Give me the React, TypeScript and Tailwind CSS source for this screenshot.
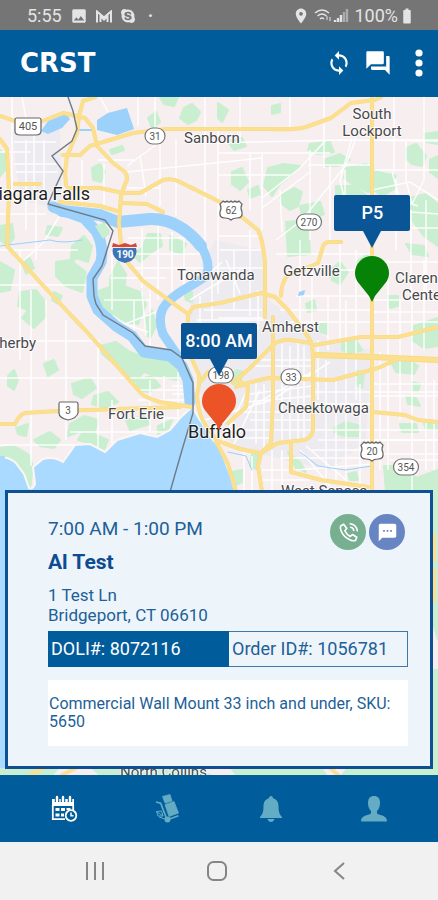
import React from 'react';
import {
  MdBatteryFull,
  MdForum,
  MdImage,
  MdLocationOn,
  MdSms,
  MdSync,
} from 'react-icons/md';
import { FaSkype } from 'react-icons/fa';

const parks = [
  '0,150 6,156 5,170 0,176',
  '160,97 178,97 174,106 164,104',
  '184,108 192,104 200,112 196,120 188,124 180,118',
  '148,118 156,112 160,122 152,128',
  '92,168 100,164 105,172 101,182 93,180',
  '110,150 122,146 124,150 112,154',
  '0,226 12,224 14,238 8,246 0,240',
  '48,226 62,228 58,236 46,234',
  '72,246 84,236 92,246 88,262 76,258 70,266',
  '56,262 70,260 86,272 82,292 66,286 56,276',
  '22,262 30,258 34,268 26,274',
  '96,228 104,224 109,233 103,238',
  '148,234 160,234 162,246 152,252 140,262 132,254 142,248',
  '170,236 186,244 182,254 170,250',
  '110,278 118,262 126,274 124,292 110,290',
  '96,292 118,284 140,292 146,304 138,324 126,322 114,314 104,316 96,306',
  '146,318 152,310 156,326 150,338 146,334',
  '0,262 14,270 10,290 0,292',
  '20,292 36,290 44,300 46,316 34,328 22,318 28,310 18,306',
  '54,292 62,296 58,304 52,300',
  '44,364 54,360 58,370 48,376',
  '8,376 14,370 18,380 14,390 8,386',
  '100,346 116,342 130,352 142,356 170,362 182,372 178,380 156,376 144,372 134,382 124,374 112,362 102,354',
  '136,380 152,376 160,386 148,392 138,390',
  '72,384 90,378 96,388 82,398 74,394',
  '94,396 108,392 118,402 104,408 92,404',
  '70,424 84,416 98,420 94,434 108,440 104,450 92,444 78,440 84,430 68,436',
  '126,420 144,416 150,424 130,430',
  '34,440 50,432 60,440 54,448 40,446',
  '16,428 28,424 26,436 18,434',
  '0,448 14,446 28,454 33,466 30,488 22,476 12,464 0,456',
  '158,426 172,420 168,430 158,434',
  '218,103 228,110 222,122 218,118',
  '228,142 242,138 246,146 234,150',
  '272,106 280,104 280,112 272,114',
  '268,168 284,164 300,166 290,176 280,184 272,196 264,186',
  '280,196 294,188 302,192 298,206 290,210 282,204',
  '286,222 308,220 310,254 288,256',
  '310,144 330,142 334,152 318,154 308,150',
  '324,160 340,154 350,160 338,166 326,166',
  '346,168 366,164 378,172 396,176 384,188 368,192 352,184 344,178',
  '336,186 354,186 370,198 366,210 350,204 336,206',
  '300,206 320,202 324,214 310,222 302,216',
  '406,148 416,144 426,156 422,166 412,164 406,158',
  '430,160 438,156 438,178 430,172',
  '424,134 438,132 438,144 426,142',
  '376,178 392,174 396,188 382,196 374,190',
  '410,198 426,194 438,204 438,246 424,236 412,220 408,210',
  '330,270 340,262 348,272 340,284 332,280',
  '356,262 368,254 366,272 358,276',
  '406,244 424,246 428,256 412,254',
  '232,172 242,168 248,182 240,190 232,184',
  '248,190 258,186 260,194 250,198',
  '184,292 192,292 192,302 186,300',
  '306,304 314,300 316,310 308,312',
  '320,324 328,324 328,334 320,332',
  '342,342 356,340 362,350 350,354 342,350',
  '388,296 398,296 398,306 390,308',
  '414,326 438,318 438,346 424,348 412,340',
  '392,364 406,358 418,366 414,374 396,372',
  '356,370 364,374 362,388 356,384',
  '334,428 346,422 360,426 358,436 344,436 334,432',
  '400,424 416,424 418,432 402,432',
  '406,396 416,398 420,406 408,404',
  '424,424 438,422 438,430 426,430',
  '384,466 404,466 416,478 438,470 438,492 386,492',
  '288,452 300,462 306,472 296,468',
  '232,472 242,470 242,482 234,486',
  '252,454 260,456 258,470 250,466',
  '348,474 356,472 358,480 350,480',
  '412,382 420,384 418,392 412,390',
  '236,370 244,372 238,386 232,380',
  '432,492 438,492 438,640 432,620',
  '434,670 438,670 438,775 434,775',
  '0,766 60,766 52,775 0,775',
  '90,766 190,766 210,775 100,775',
  '230,766 320,766 326,775 236,775',
  '350,766 438,766 438,775 342,775',
];

const minorRoads = [
  'M0 152H30M12 97V200M26 140V230M34 128V196M44 140L44 190M14 142H56M14 164H60M16 172H58M0 214H46M36 200V260M22 97L26 118',
  'M100 97L108 112M138 97V126M155 97V128M205 97V280M218 130V294M0 250H78M20 250V360M0 285H90M60 215L44 242L22 262',
  'M98 160H135M82 160V214M104 164V206M126 172L205 164L262 158M127 166L160 142M160 130V206M176 140V216M127 188H160M140 155L146 196',
  'M128 238H200M132 254H202M130 268H204M142 228V288M158 226V300M172 232V292M184 238V288M110 278H166M104 300H150M112 252V310',
  'M0 341H100M0 378H192M31 290V466M66 320V440M98 345V452M0 445H80M70 432H172M112 400V444M150 380V432M164 376V428M178 372V420M138 400H190M140 390H188M172 386H192M172 394H192M130 418H180M46 300V360',
  'M150 290V346M134 300V334M120 326L156 312M108 318L148 332M146 336L142 292',
  'M218 143L250 142L340 140L438 141M218 153H330M218 175H290M250 153V210M262 153V230M324 97V168M240 97V143M290 97V128',
  'M262 198L300 168L326 140M262 208L310 172M276 240L302 220L346 165L356 138M308 165H372M310 150V240M280 190L282 232M330 166V240M345 170V200M352 138L340 180L346 206',
  'M372 140H438M372 170H438M372 190L410 182L438 200M372 202H400M406 140V180L412 204L424 180V97M394 97V172M392 172L400 200L418 206M372 228H438M372 262H438M411 210V300M426 200V300M396 180V250M384 210L438 214',
  'M276 254H371M300 240V330M312 262V330M340 240V340M356 250V400M318 270H372M280 310H372M290 322H438M296 296H372M328 296V350M346 300V400M388 260V470M400 300V420M412 290V490M424 260V350M372 300H438M372 312H438M380 352V470',
  'M190 300L206 290L240 270M200 296V340M212 280V320M226 260L240 294M234 250V310M250 230V316M258 290V330M196 320H264M204 310H262M196 286L222 262M218 236H262M220 250H262M214 268H264',
  'M218 318H262M264 326H312M260 360H312M255 366H312M250 394L312 386M246 402L312 396M240 412H312M250 420H312M228 430H312M234 438H270M256 380V444M264 384V448M282 344V440M290 346V440M298 340V440M304 346V442',
  'M218 452L250 384M232 448L260 390M205 420L272 400L330 362M210 430L312 372M312 392H438M312 404H372M312 430H438M318 440H438M326 360V492M336 380V480M346 400V492M360 384V492M312 450H372M280 458H372M296 470L372 464M244 452V492M252 456V492M272 450V492M282 450V492',
  'M372 384H438M372 396H438M372 440H438M372 454H438M390 460H438M426 360V470M434 380V470M300 450L330 486M306 446L346 480M262 470H290M262 480H310M318 340V400',
];

const highways = [
  'M0 116L15 121L40 122L63 113L72 115L85 118L93 128L97 146L113 163L125 172Q129 178 125 184L121 196L119 223L121 243L128 263L143 281L155 290L188 314',
  'M95 97L83 101L79 116L77 133L67 156L65 173L66 185',
  'M63 155H80L90 146L133 133L167 129H270Q296 130 306 127L331 118L351 103L375 100L381 97',
  'M0 139L7 149L9 193L7 246L50 293L87 332L140 392Q143 397 160 402L192 407',
  'M15 184H40',
  'M68 188H100L123 193H140L163 180Q172 178 180 182L220 202L243 218L258 230Q263 240 265 263V317',
  'M60 202L100 206L117 211M123 203L147 204L163 212',
  'M372 97V492',
  'M341 242H328Q323 243 322 250L318 263L287 276Q281 284 281 296',
  'M188 315L193 307L220 303L261 293L275 297L288 310L309 338Q313 344 313 360V428Q313 438 304 440L278 443L261 453L240 449L218 441',
  'M315 345L361 337H398L438 327',
  'M233 383L250 368L273 345Q280 339 291 340L311 343',
  'M273 317V400L271 443L261 453',
  'M238 380L248 387L246 407L228 423',
  'M236 387L248 383L268 378L333 380L378 368L400 358',
  'M373 412L405 415L418 420L438 422',
  'M291 443V472L321 480L368 487',
  'M261 453L258 466L262 492',
  'M216 441L228 464L236 492',
  'M0 424H15Q20 414 25 413L58 411L180 407',
  'M188 314L187 348L199 375Q200 383 197 395Q198 414 206 426L217 441',
  'M200 382L208 372L216 372',
];

const towns: { name: string; x: number; y: number; anchor?: 'start' | 'middle' | 'end'; big?: boolean }[] = [
  { name: 'Niagara Falls', x: 90, y: 200, anchor: 'end', big: true },
  { name: 'Buffalo', x: 188, y: 438, big: true },
  { name: 'Sanborn', x: 184, y: 143 },
  { name: 'South', x: 372, y: 119, anchor: 'middle' },
  { name: 'Lockport', x: 372, y: 136, anchor: 'middle' },
  { name: 'Tonawanda', x: 177, y: 280 },
  { name: 'Getzville', x: 283, y: 276 },
  { name: 'Clarence', x: 395, y: 283 },
  { name: 'Center', x: 402, y: 300 },
  { name: 'Amherst', x: 262, y: 332 },
  { name: 'Netherby', x: 36, y: 348, anchor: 'end' },
  { name: 'Fort Erie', x: 108, y: 419 },
  { name: 'Cheektowaga', x: 278, y: 413 },
  { name: 'West Seneca', x: 281, y: 496 },
  { name: 'North Collins', x: 120, y: 777 },
];

const shields = [
  { label: '31', x: 155, y: 136, w: 20 },
  { label: '270', x: 309, y: 222, w: 25 },
  { label: '198', x: 221, y: 375, w: 25 },
  { label: '33', x: 291, y: 377, w: 20 },
  { label: '354', x: 406, y: 467, w: 25 },
];

const usShields = [
  { label: '62', x: 231, y: 210 },
  { label: '20', x: 372, y: 451 },
];

const RouteMap = () => (
  <svg
    className="absolute inset-0 h-full w-full"
    viewBox="0 97 438 678"
    preserveAspectRatio="xMidYMin slice"
    fontFamily="Roboto, sans-serif"
    aria-label="Route map"
  >
    <rect y="97" width="438" height="678" fill="#f6eeef" />

    {/* Built-up areas */}
    <path d="M12 130L60 130L62 200L46 206L20 200Z M190 285L215 240L262 250L268 300L330 340L372 350L366 440L330 470L240 450L205 420L190 330Z" fill="#edebf0" />
    <g fill="#c9efd0" stroke="#c9efd0" strokeWidth="2" strokeLinejoin="round">
      {parks.map((points) => (
        <polygon key={points} points={points} />
      ))}
    </g>

    <g fill="none" stroke="#fff" strokeWidth="1.5" strokeOpacity="0.9" strokeLinejoin="round">
      {minorRoads.map((d) => (
        <path key={d} d={d} />
      ))}
    </g>

    {/* Lake and river */}
    <path
      d="M0 457Q8 457 15 462L24 474L29 488Q33 490 35 484L33 467L43 459Q54 456 63 462L75 445L90 444L105 452L117 440L140 433L157 437L170 430L180 418L192 407L200 420L213 440L220 448L231 477L235 492L180 640L0 766Z"
      fill="#aadaff"
      stroke="#fdf6f3"
      strokeWidth="2"
    />
    <path d="M0 456V768" stroke="#aadaff" strokeWidth="10" />
    <g fill="none" stroke="#9bd1fa" strokeLinejoin="round" strokeLinecap="round">
      <path strokeWidth="11" d="M53 207L84 218L96 231Q104 245 101 262L92 278V296L98 310L116 326L132 336L144 352L170 356L182 366L188 380L190 402" />
      <path strokeWidth="12" d="M62 211L100 215L118 222L150 219C172 218 190 232 201 246" />
      <path strokeWidth="9" d="M201 246C208 258 210 268 206 276C196 284 180 290 170 300C160 308 158 320 163 334L178 356" />
      <path strokeWidth="1" d="M82 240Q62 244 50 240L0 246M228 452L246 456L252 470M300 452L318 466L345 470L372 466" />
    </g>
    <path d="M95 226L104 223L110 231L103 239Z" fill="#c9efd0" />
    <path d="M41 131L48 121L66 114L70 119L62 128L48 134Z M97 120L108 113L127 108L134 129L117 135L97 130Z M79 129H92V131H79Z M299 292L305 290L304 295L298 296Z" fill="#9bd1fa" />

    <g fill="none" strokeLinejoin="round" strokeLinecap="round">
      <g stroke="#f8da80" strokeWidth="4">
        {highways.map((d) => (
          <path key={d} d={d} />
        ))}
        <path d="M317 355L372 357L438 360" strokeWidth="6" />
      </g>
      <g stroke="#fce08f" strokeWidth="3">
        {highways.map((d) => (
          <path key={d} d={d} />
        ))}
        <path d="M317 355L372 357L438 360" strokeWidth="4" />
      </g>
      <path d="M30 775L48 766M62 775L80 766M328 766L338 775M434 535V560M434 570V600" stroke="#fce08f" strokeWidth="4" />
    </g>

    {/* National border */}
    <path
      d="M68 97L73 111L77 129L72 141L52 156L63 171L55 188L48 204L105 220L113 231L102 266L93 279L94 296L96 304L103 315L133 333L145 346L171 350L182 358L193 383V413L182 450L170 492"
      fill="none"
      stroke="#6f7c88"
      strokeWidth="1.4"
    />

    {/* Road shields */}
    <g fontSize="10" textAnchor="middle" fill="#555">
      {shields.map(({ label, x, y, w }) => (
        <g key={label}>
          <rect x={x - w / 2} y={y - 8} width={w} height="16" rx="8" fill="#fff" stroke="#777" strokeWidth="1.2" />
          <text x={x} y={y + 4}>{label}</text>
        </g>
      ))}
      {usShields.map(({ label, x, y }) => (
        <g key={label}>
          <path
            transform={`translate(${x} ${y})`}
            d="M-8 -9Q-6 -7 -4 -9Q-2 -7 0 -9Q2 -7 4 -9Q6 -7 8 -9L11 -6Q9 -2 11 2Q12 8 6 8Q2 8 0 10Q-2 8 -6 8Q-12 8 -11 2Q-9 -2 -11 -6Z"
            fill="#fff"
            stroke="#666"
            strokeWidth="1.2"
          />
          <text x={x} y={y + 4}>{label}</text>
        </g>
      ))}
      <path d="M17 118H39Q41 118 41 120V131Q41 135 36 135H20Q15 135 15 131V120Q15 118 17 118Z" fill="#fff" stroke="#666" strokeWidth="1.2" />
      <text x="28" y="130" fontSize="11">405</text>
      <path d="M60 402H76Q78 402 78 404V413Q77 418 68 420Q59 418 59 413V404Q59 402 60 402Z" fill="#fff" stroke="#666" strokeWidth="1.2" />
      <text x="68" y="414">3</text>
      <path d="M113 248Q111 256 119 261L125 263L131 261Q138 256 136 248Z" fill="#3c74b8" />
      <path d="M113 243L119 245L125 243L131 245L136 243L137 247H112Z" fill="#d5473f" />
      <text x="125" y="258" fill="#fff" fontWeight="700">190</text>
    </g>

    <g fill="#48494b" stroke="#fff" strokeWidth="2" strokeOpacity="0.8" paintOrder="stroke" strokeLinejoin="round">
      {towns.map(({ name, x, y, anchor, big }) => (
        <text key={name} x={x} y={y} textAnchor={anchor} fontSize={big ? 18 : 15} fill={big ? '#1f1f20' : undefined}>
          {name}
        </text>
      ))}
    </g>
  </svg>
);

const StopPin = ({ label, color, className }: { label: string; color: string; className: string }) => (
  <button type="button" className={`absolute flex w-[76px] -translate-x-1/2 flex-col items-center ${className}`}>
    <span className="h-9 w-full rounded-xs bg-[#0a5596] text-lg leading-9 font-medium text-white">{label}</span>
    <svg width="18" height="17" viewBox="0 0 18 17" aria-hidden="true">
      <path d="M0 0H18L9 17Z" fill="#0a5596" />
    </svg>
    <svg className="mt-2" width="34" height="46" viewBox="0 0 34 46" aria-hidden="true">
      <path d="M17 46L14 40L4 27.500C1 24 0 20.500 0 17A17 17 0 0 1 34 17C34 20.500 33 24 30 27.500L20 40Z" fill={color} />
    </svg>
  </button>
);

const StatusBar = () => (
  <div className="flex h-[30px] items-center justify-between bg-[#757575] pt-[2px] pr-[22px] pl-[27px] text-lg text-[#e4e4e4]">
    <div className="flex items-center gap-2">
      <span>5:55</span>
      <MdImage className="h-[18px] w-[18px]" />
      <svg width="16" height="13" viewBox="0 0 16 13" fill="none" stroke="currentColor" strokeWidth="2" aria-hidden="true">
        <path d="M1 12.500V1.500L8 7.500L15 1.500V12.500M4.500 12V6L8 9.500L11.500 6V12" />
      </svg>
      <FaSkype className="h-4 w-4" />
      <span className="ml-1 font-bold">·</span>
    </div>
    <div className="flex items-center">
      <MdLocationOn className="mr-1 h-[18px] w-[18px]" />
      <svg className="mr-1" width="36" height="16" viewBox="0 0 36 16" fill="none" stroke="currentColor" strokeWidth="1.500" aria-hidden="true">
        <path d="M1 5Q8 -1 15 5M3.500 8Q8 4 12.500 8M6 11Q8 9 10 11" />
        <path d="M13 12V8M16 9V13" strokeWidth="1" />
        <path d="M21 14V12M24 14V10M27 14V7" strokeWidth="2.400" />
        <path d="M30 14V4M33 14V1" strokeWidth="2.400" opacity="0.5" />
      </svg>
      <span>100%</span>
      <MdBatteryFull className="h-[18px] w-[18px]" />
    </div>
  </div>
);

const Header = () => (
  <header className="flex h-[67px] items-center justify-between bg-[#005c9a] pr-3 pl-5 text-white">
    <h1 className="font-['DejaVu_Sans'] text-[26px] font-bold">CRST</h1>
    <div className="flex items-center pb-[2px]">
      <button type="button" aria-label="Sync">
        <MdSync className="h-[26px] w-[26px]" />
      </button>
      <button type="button" aria-label="Messages" className="ml-3">
        <MdForum className="h-7 w-7" />
      </button>
      <button type="button" aria-label="More options" className="ml-5">
        <svg width="14" height="28" viewBox="0 0 14 28" fill="currentColor" aria-hidden="true">
          <circle cx="7" cy="4" r="3.600" />
          <circle cx="7" cy="14" r="3.600" />
          <circle cx="7" cy="24" r="3.600" />
        </svg>
      </button>
    </div>
  </header>
);

const StopCard = () => (
  <section className="relative mx-[5px] mt-auto mb-[6px] border-3 border-[#0f4f94] bg-[#edf5fb] pt-[21px] pr-[22px] pb-5 pl-10 text-[#225f98]">
    <div className="flex h-7 items-start justify-between">
      <p className="pt-[3px] text-[19px] leading-6">7:00 AM - 1:00 PM</p>
      <div className="flex gap-[3px] pr-[3px] text-white">
        <button type="button" aria-label="Call customer" className="flex h-9 w-9 items-center justify-center rounded-full bg-[#78af90]">
          <svg width="21" height="21" viewBox="0 0 24 24" fill="none" stroke="currentColor" strokeWidth="1.900" strokeLinecap="round" strokeLinejoin="round" aria-hidden="true">
            <path d="M3 4.500L6.500 2.500L10 7.500L7.800 10Q10 14.500 14 16.500L16.500 14.300L21.500 17.500L20 21Q17.500 22 14 20.500Q6 17 3.500 10Q2.200 6.500 3 4.500Z" />
            <path d="M14 2Q21 3 22 10M14.500 6Q17.500 6.500 18 9.500" />
          </svg>
        </button>
        <button type="button" aria-label="Message customer" className="flex h-9 w-9 items-center justify-center rounded-full bg-[#6685c2]">
          <MdSms className="h-[21px] w-[21px]" />
        </button>
      </div>
    </div>
    <h2 className="mt-[6px] text-[21px] leading-7 font-bold text-[#0d4c92]">Al Test</h2>
    <address className="mt-[9px] text-[17px] leading-5 not-italic">
      1 Test Ln
      <br />
      Bridgeport, CT 06610
    </address>
    <div className="mt-[6px] grid h-9 grid-cols-2 border border-[#3f78a8] text-lg">
      <div className="-m-px flex items-center bg-[#005c9a] pl-[3px] text-white">DOLI#: 8072116</div>
      <div className="flex items-center pl-1">Order ID#: 1056781</div>
    </div>
    <div className="mt-[13px] bg-white py-[15px] pl-px text-base leading-[18px]">
      Commercial Wall Mount 33 inch and under, SKU: 5650
    </div>
  </section>
);

const BottomNav = () => (
  <nav className="grid h-[67px] grid-cols-4 items-center justify-items-center bg-[#005c9a] px-3 text-[#64acc4]">
    <button type="button" aria-label="Schedule" className="text-white">
      <svg width="28" height="28" viewBox="0 0 28 28" aria-hidden="true">
        <path d="M2 4H24V11H2Z" fill="currentColor" />
        <path d="M7 1V7M13 1V7M20 1V7" stroke="#005c9a" strokeWidth="4.500" />
        <path d="M7 2V6M13 2V6M20 2V6" stroke="currentColor" strokeWidth="2.400" strokeLinecap="round" />
        <path d="M2.800 10V24.200H15M23.200 10V15" fill="none" stroke="currentColor" strokeWidth="1.800" />
        <path d="M5.500 13H9.500V16H5.500ZM11 13H15V16H11ZM16.500 13H20.500V15H16.500ZM5.500 18.500H9.500V21.500H5.500ZM11 18.500H14V21.500H11Z" fill="currentColor" />
        <circle cx="21" cy="20.500" r="5.300" fill="#005c9a" stroke="currentColor" strokeWidth="1.800" />
        <path d="M21 17.500V20.800H23.500" fill="none" stroke="currentColor" strokeWidth="1.500" />
      </svg>
    </button>
    <button type="button" aria-label="Deliveries">
      <svg width="28" height="30" viewBox="0 0 28 30" fill="currentColor" aria-hidden="true">
        <path d="M9.500 2.500L17 0.500L19 7L12 9Z M12 10.500L21 7.500L25.500 19L16 22.500Z" stroke="currentColor" strokeWidth="0.800" strokeLinejoin="round" />
        <path d="M3 8L7.700 9.200L13.700 25M15 25.500L25.500 21.800" fill="none" stroke="currentColor" strokeWidth="1.700" />
        <circle cx="14.500" cy="25.500" r="3" />
        <path d="M3.500 17.500L8.500 17L10 22L5 22Z M3.500 17.500L10 22M6 23L12 25" fill="none" stroke="currentColor" strokeWidth="1" />
      </svg>
    </button>
    <button type="button" aria-label="Notifications">
      <svg width="22" height="26" viewBox="0 0 22 26" fill="currentColor" aria-hidden="true">
        <path d="M11 0C12.300 0 13 1 13 2.300C17 3.300 18.500 6.500 18.500 10C18.500 16 19.500 18.500 22 21V22H0V21C2.500 18.500 3.500 16 3.500 10C3.500 6.500 5 3.300 9 2.300C9 1 9.700 0 11 0ZM7.500 23H14.500C14 25 12.500 26 11 26C9.500 26 8 25 7.500 23Z" />
      </svg>
    </button>
    <button type="button" aria-label="Profile">
      <svg width="28" height="26" viewBox="0 0 28 26" fill="currentColor" aria-hidden="true">
        <path d="M14 0C18 0 20 2.500 20 7C20 11 18.500 13.500 17 15V17.500C20 19.500 27 19 27 25.500H1C1 19 8 19.500 11 17.500V15C9.500 13.500 8 11 8 7C8 2.500 10 0 14 0Z" />
      </svg>
    </button>
  </nav>
);

const SystemNav = () => (
  <div className="grid h-[58px] grid-cols-3 items-center justify-items-center bg-[#f1f1f1] pr-[38px] pl-[34px] text-[#858585]">
    <button type="button" aria-label="Recent apps">
      <svg width="20" height="18" viewBox="0 0 20 18" stroke="currentColor" strokeWidth="2" aria-hidden="true">
        <path d="M2 0V18M10 0V18M18 0V18" />
      </svg>
    </button>
    <button type="button" aria-label="Home">
      <svg width="20" height="20" viewBox="0 0 20 20" fill="none" stroke="currentColor" strokeWidth="2" aria-hidden="true">
        <rect x="1" y="1" width="18" height="18" rx="5.500" />
      </svg>
    </button>
    <button type="button" aria-label="Back">
      <svg width="12" height="18" viewBox="0 0 12 18" fill="none" stroke="currentColor" strokeWidth="2" aria-hidden="true">
        <path d="M11 1L2 9L11 17" />
      </svg>
    </button>
  </div>
);

const App = () => {
  return (
    <div className="flex min-h-screen flex-col font-[Roboto,sans-serif]">
      <StatusBar />
      <Header />
      <main className="relative flex flex-1 flex-col overflow-hidden">
        <RouteMap />
        <StopPin label="P5" color="#068306" className="top-[98px] left-[85%]" />
        <StopPin label="8:00 AM" color="#ec5427" className="top-[226px] left-1/2" />
        <StopCard />
      </main>
      <BottomNav />
      <SystemNav />
    </div>
  );
};

export default App;
